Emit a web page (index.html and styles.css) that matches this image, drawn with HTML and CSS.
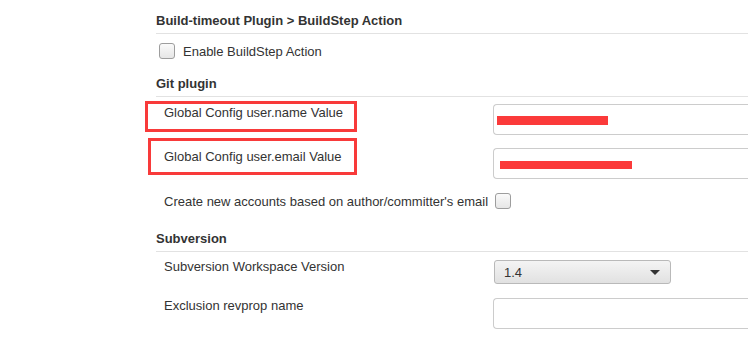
FILE: index.html
```html
<!DOCTYPE html>
<html lang="en">
<head>
    <meta charset="UTF-8">
    <title>Configure System</title>
    <link rel="stylesheet" href="styles.css">
</head>
<body>
    <div class="page">
        <!-- Build-timeout -->
        <h3 class="group-title first">Build-timeout Plugin &gt; BuildStep Action</h3>
        <div class="check-row">
            <span class="cb"></span>
            <span>Enable BuildStep Action</span>
        </div>

        <!-- Git -->
        <h3 class="group-title">Git plugin</h3>
        <div class="field">
            <div class="field-label">Global Config user.name Value</div>
            <div class="field-input">
                <div class="text-box"></div>
                <div class="redact redact-name"></div>
            </div>
        </div>
        <div class="field">
            <div class="field-label">Global Config user.email Value</div>
            <div class="field-input">
                <div class="text-box"></div>
                <div class="redact redact-email"></div>
            </div>
        </div>
        <div class="check-row inline">
            <span>Create new accounts based on author/committer's email</span>
            <span class="cb"></span>
        </div>

        <!-- Subversion -->
        <h3 class="group-title">Subversion</h3>
        <div class="field select-field">
            <div class="field-label">Subversion Workspace Version</div>
            <div class="field-input">
                <div class="select-box">
                    <span>1.4</span>
                    <span class="caret"></span>
                </div>
            </div>
        </div>
        <div class="field last">
            <div class="field-label">Exclusion revprop name</div>
            <div class="field-input">
                <div class="text-box"></div>
            </div>
        </div>

        <!-- annotation boxes -->
        <div class="mark mark-name"></div>
        <div class="mark mark-email"></div>
    </div>
</body>
</html>
```

FILE: styles.css
```css
html, body {
    margin: 0;
    background: #fff;
    overflow: hidden;
}
body {
    font-family: 'Liberation Sans', Arial, sans-serif;
    font-size: 13px;
    color: #333;
}
.page {
    position: relative;
    padding: 13px 0 0 156px;
    height: 338px;
    box-sizing: border-box;
}
.group-title {
    margin: 14px 0 0 0;
    padding: 0 0 4px 0;
    font-size: 13px;
    line-height: 16px;
    font-weight: bold;
    color: #333;
    border-bottom: 1px solid #e2e2e2;
}
.group-title.first {
    margin-top: 0;
}
.check-row {
    display: flex;
    align-items: center;
    gap: 8px;
    height: 34px;
    padding-left: 3px;
}
.check-row.inline {
    height: 32px;
    padding-left: 8px;
    gap: 7px;
}
.check-row + .group-title {
    margin-top: 8px;
}
.check-row.inline + .group-title {
    margin-top: 14px;
}
.cb {
    width: 14px;
    height: 14px;
    border: 1px solid #9d9d9d;
    border-radius: 3px;
    background: linear-gradient(#fafafa, #e6e6e6);
}
.field {
    display: flex;
    height: 44px;
    padding-top: 7px;
    box-sizing: border-box;
}
.field-label {
    width: 337px;
    flex: none;
    padding: 1px 0 0 8px;
    box-sizing: border-box;
    line-height: 16px;
}
.field-input {
    position: relative;
    flex: 1;
}
/* the box runs on past the right edge of the shot */
.text-box {
    height: 31px;
    border: 1px solid #ccc;
    border-right: none;
    border-radius: 4px 0 0 4px;
    box-sizing: border-box;
    background: #fff;
}
.redact {
    position: absolute;
    background: #fb3a3a;
}
.redact-name {
    left: 4px;
    top: 12px;
    width: 111px;
    height: 9px;
}
.redact-email {
    left: 7px;
    top: 13px;
    width: 132px;
    height: 8px;
}
.select-field {
    height: 39px;
    padding-top: 8px;
}
.select-field .field-label {
    padding-top: 0;
    margin-top: -1px;
}
.select-field .field-input {
    padding-left: 1px;
}
.select-box {
    width: 177px;
    height: 24px;
    box-sizing: border-box;
    border: 1px solid #b9b9b9;
    border-radius: 3px;
    background: linear-gradient(#f4f4f4, #e1e1e1);
    display: flex;
    align-items: center;
    justify-content: space-between;
    padding: 1px 10px 0 9px;
}
.caret {
    width: 0;
    height: 0;
    border-left: 5px solid transparent;
    border-right: 5px solid transparent;
    border-top: 5px solid #333;
}
.field.last .field-label {
    padding-top: 0;
}
.mark {
    position: absolute;
    border: 3px solid #f83a3a;
    box-sizing: border-box;
}
.mark-name {
    left: 145px;
    top: 101px;
    width: 212px;
    height: 31px;
}
.mark-email {
    left: 148px;
    top: 138px;
    width: 209px;
    height: 37px;
}
```
